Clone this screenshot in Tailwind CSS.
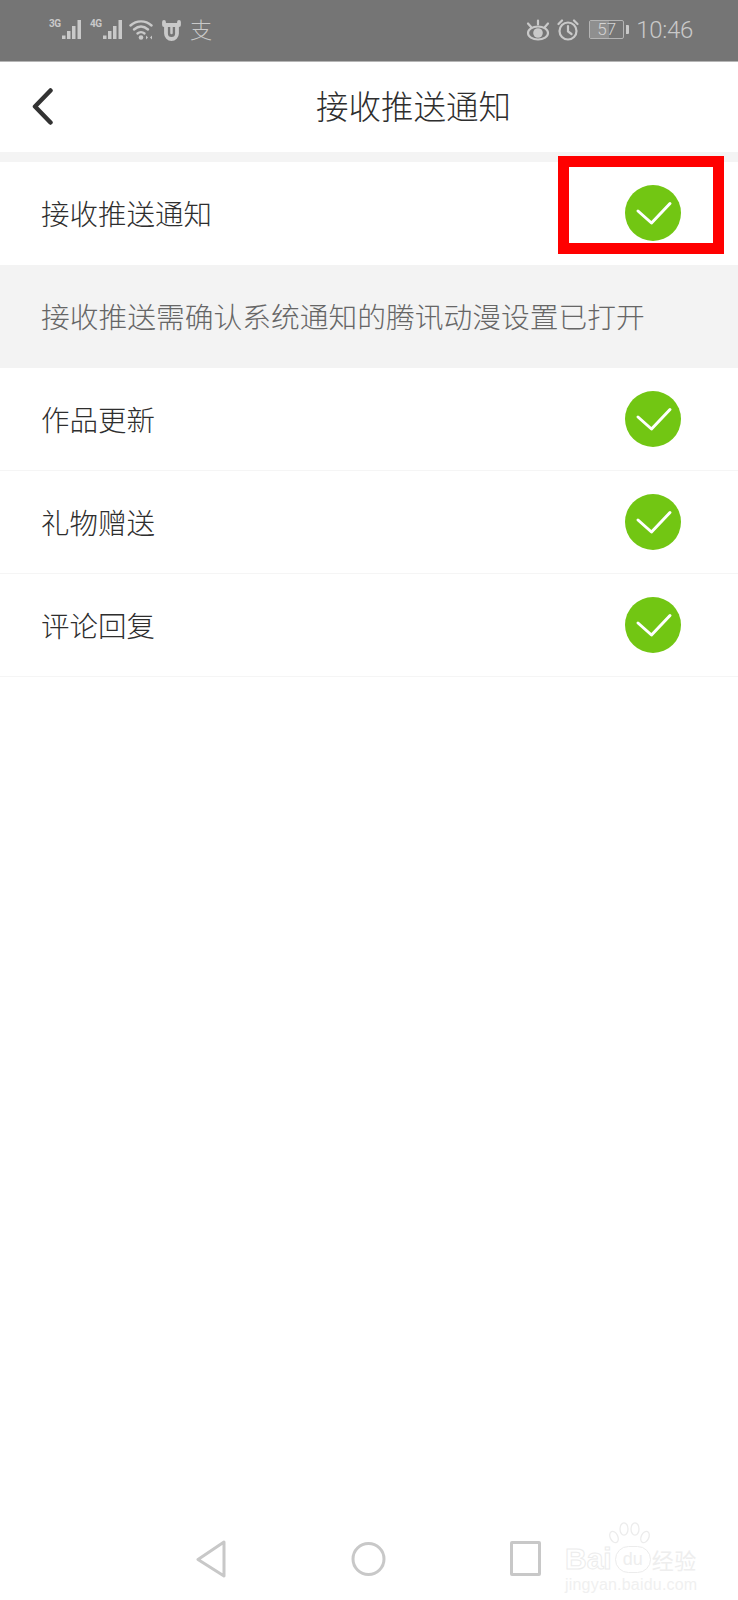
<!DOCTYPE html>
<html lang="zh-CN">
<head>
<meta charset="utf-8">
<title>接收推送通知</title>
<script src="https://cdn.jsdelivr.net/npm/@tailwindcss/browser@4"></script>
</head>
<body class="bg-white">
<div class="relative w-[738px] h-[1600px] overflow-hidden flex flex-col bg-white font-['Noto_Sans_CJK_SC','Noto_Sans',sans-serif]">

  <!-- status bar -->
  <div class="h-[62px] shrink-0 bg-[#757575] border-b border-[#b5b5b5] flex items-center justify-between pl-[49px] pr-[45px] text-[#c9c9c9]">
    <div class="flex items-center h-[24px] -mt-[2px]">
      <span class="w-[12px] text-[10px] leading-none font-['Roboto',sans-serif] font-bold self-start mt-[1px] tracking-[-0.5px]">3G</span>
      <svg class="w-[22px] h-[22px]" viewBox="0 0 22 22" fill="currentColor"><rect x="1" y="16.500" width="3.500" height="3.500"/><rect x="6" y="12" width="3.500" height="8"/><rect x="11" y="7" width="3.500" height="13"/><rect x="16.500" y="1" width="3.500" height="19"/></svg>
      <span class="w-[12px] ml-[7px] text-[10px] leading-none font-['Roboto',sans-serif] font-bold self-start mt-[1px] tracking-[-0.5px]">4G</span>
      <svg class="w-[22px] h-[22px]" viewBox="0 0 22 22" fill="currentColor"><rect x="1" y="16.500" width="3.500" height="3.500"/><rect x="6" y="12" width="3.500" height="8"/><rect x="11" y="7" width="3.500" height="13"/><rect x="16.500" y="1" width="3.500" height="19"/></svg>
      <!-- wifi -->
      <svg class="ml-[5px] w-[26px] h-[22px]" viewBox="0 0 26 22" fill="none" stroke="currentColor" stroke-width="2.400" stroke-linecap="round"><path d="M1.500 6.500C7.500 1 16.500 1 22.500 6.500"/><path d="M5 10.500C9.500 6.500 14.500 6.500 19 10.500"/><path d="M8.500 14.500C10.500 12.800 13.500 12.800 15.500 14.500"/><circle cx="12" cy="18.500" r="2.300" fill="currentColor" stroke="none"/><path d="M19 18.500l-2-2v4zM21 18.500l2-2v4z" fill="currentColor" stroke="none"/></svg>
      <!-- bull badge -->
      <svg class="ml-[6px] w-[21px] h-[22px]" viewBox="0 0 21 22" fill="none" stroke="currentColor" stroke-width="3.800" stroke-linecap="round" stroke-linejoin="round"><path d="M3 3v3h15V3"/><path d="M5 6.500v8a5.500 5.500 0 0 0 11 0v-8"/><path d="M10.500 8v6" stroke-width="2.500"/></svg>
      <span class="ml-[8px] w-[22px] text-[22px] leading-none font-light -mt-[3px]">支</span>
    </div>
    <div class="flex items-center h-[24px] -mt-[2px]">
      <!-- eye -->
      <svg class="w-[24px] h-[22px]" viewBox="0 0 24 22" fill="none" stroke="currentColor" stroke-width="2.200" stroke-linecap="round"><path d="M2 4.500l3.500 4M22 4.500l-3.500 4M12 1.500v4"/><ellipse cx="12" cy="14" rx="10" ry="6.500"/><circle cx="12" cy="14" r="4.800" fill="currentColor" stroke="none"/></svg>
      <!-- alarm clock -->
      <svg class="ml-[7px] w-[22px] h-[24px]" viewBox="0 0 22 24" fill="none" stroke="currentColor" stroke-width="2.200" stroke-linecap="round"><circle cx="11" cy="13" r="8.500"/><path d="M11 8v5.500l3.500 2.500M1.500 6L5 2.500M20.500 6L17 2.500"/></svg>
      <!-- battery -->
      <div class="ml-[10px] relative w-[35px] h-[19px] border border-[#b4b4b4] rounded-[2px] overflow-hidden">
        <div class="h-full w-[57%] bg-[#8f8f8f]"></div>
        <span class="absolute inset-0 flex items-center justify-center text-[17px] leading-none font-['Roboto',sans-serif] font-light text-[#d4d4d4]">57</span>
      </div>
      <div class="ml-[2px] w-[3px] h-[9px] bg-[#c9c9c9] rounded-r-[1px]"></div>
      <span class="ml-[7px] text-[24px] leading-none font-['Roboto',sans-serif] font-light tracking-[-0.3px]">10:46</span>
    </div>
  </div>

  <!-- title bar -->
  <div class="h-[90px] shrink-0 flex items-center pl-[32px]">
    <svg class="w-[21px] h-[37px] shrink-0 -mt-[2px]" viewBox="0 0 21 37" fill="none" stroke="#333333" stroke-width="4.500" stroke-linecap="round" stroke-linejoin="round"><path d="M18.500 2.500L3 18.500L18.500 34.500"/></svg>
    <h1 class="ml-[263px] text-[32.500px] leading-none font-light text-[#2e2e2e] whitespace-nowrap -mt-[3px]">接收推送通知</h1>
  </div>

  <div class="h-[10px] shrink-0 bg-[#f4f4f4]"></div>

  <div class="h-[103px] shrink-0 flex items-center justify-between pl-[41px] pr-[57px]">
    <span class="text-[28.500px] leading-none font-light text-[#2e2e2e]">接收推送通知</span>
    <svg class="w-[56px] h-[56px] -mt-[1px]" viewBox="0 0 56 56"><circle cx="28" cy="28" r="28" fill="#72c613"/><path d="M13 26L26.500 38L45 18.500" fill="none" stroke="#ffffff" stroke-width="3" stroke-linecap="round" stroke-linejoin="round"/></svg>
  </div>

  <div class="h-[103px] shrink-0 bg-[#f3f3f3] flex items-center pl-[41px]">
    <span class="text-[28.750px] leading-none font-light text-[#666666] whitespace-nowrap">接收推送需确认系统通知的腾讯动漫设置已打开</span>
  </div>

  <div class="h-[103px] shrink-0 flex items-center justify-between pl-[41px] pr-[57px] border-b border-[#f5f5f5]">
    <span class="text-[28.500px] leading-none font-light text-[#2e2e2e] mt-[1px]">作品更新</span>
    <svg class="w-[56px] h-[56px] -mt-[1px]" viewBox="0 0 56 56"><circle cx="28" cy="28" r="28" fill="#72c613"/><path d="M13 26L26.500 38L45 18.500" fill="none" stroke="#ffffff" stroke-width="3" stroke-linecap="round" stroke-linejoin="round"/></svg>
  </div>
  <div class="h-[103px] shrink-0 flex items-center justify-between pl-[41px] pr-[57px] border-b border-[#f5f5f5]">
    <span class="text-[28.500px] leading-none font-light text-[#2e2e2e] mt-[1px]">礼物赠送</span>
    <svg class="w-[56px] h-[56px] -mt-[1px]" viewBox="0 0 56 56"><circle cx="28" cy="28" r="28" fill="#72c613"/><path d="M13 26L26.500 38L45 18.500" fill="none" stroke="#ffffff" stroke-width="3" stroke-linecap="round" stroke-linejoin="round"/></svg>
  </div>
  <div class="h-[103px] shrink-0 flex items-center justify-between pl-[41px] pr-[57px] border-b border-[#f5f5f5]">
    <span class="text-[28.500px] leading-none font-light text-[#2e2e2e] mt-[1px]">评论回复</span>
    <svg class="w-[56px] h-[56px] -mt-[1px]" viewBox="0 0 56 56"><circle cx="28" cy="28" r="28" fill="#72c613"/><path d="M13 26L26.500 38L45 18.500" fill="none" stroke="#ffffff" stroke-width="3" stroke-linecap="round" stroke-linejoin="round"/></svg>
  </div>

  <!-- navigation keys -->
  <div class="mt-auto h-[37px] mb-[23px] flex items-center pl-[196px]">
    <svg class="w-[30px] h-[38px]" viewBox="0 0 30 38" fill="none" stroke="#c8c8c8" stroke-width="3" stroke-linejoin="round"><path d="M28 2L2 19.500L28 36z"/></svg>
    <svg class="ml-[125px] w-[35px] h-[38px]" viewBox="0 0 35 38"><circle cx="17.500" cy="19" r="15.500" fill="none" stroke="#c8c8c8" stroke-width="3"/></svg>
    <div class="ml-[124px] w-[31px] h-[35px] border-[3px] border-[#c8c8c8] rounded-[2px]"></div>
  </div>

  <!-- highlight frame around the first toggle -->
  <div class="absolute left-[558px] top-[156px] w-[166px] h-[98px] border-[11px] border-[#ff0000]"></div>

  <!-- site mark in the lower corner -->
  <div class="absolute left-[565px] top-[1522px] w-[134px] h-[72px] text-[#eeeeee] font-['Liberation_Sans',sans-serif]">
    <svg class="absolute left-[44px] top-0 w-[42px] h-[28px]" viewBox="0 0 42 28" fill="none" stroke="#ececec" stroke-width="1.300"><ellipse cx="5" cy="15" rx="3.800" ry="6" transform="rotate(-25 5 15)"/><ellipse cx="15" cy="7" rx="4" ry="6.200"/><ellipse cx="26" cy="7" rx="4" ry="6.200"/><ellipse cx="36" cy="15" rx="3.800" ry="6" transform="rotate(25 36 15)"/></svg>
    <div class="absolute left-0 top-[22px] flex items-center">
      <span class="text-[30px] leading-none font-bold text-transparent [-webkit-text-stroke:1px_#ececec]">Bai</span>
      <span class="ml-[3px] w-[36px] h-[27px] rounded-full border border-[#ececec] flex items-center justify-center text-[18px] leading-none">du</span>
      <span class="ml-[1px] text-[22px] leading-none font-['Noto_Sans_CJK_SC',sans-serif] whitespace-nowrap tracking-[0.5px]">经验</span>
    </div>
    <div class="absolute left-0 top-[55px] text-[16px] leading-none whitespace-nowrap tracking-[0.2px] text-[#f0f0f0]">jingyan.baidu.com</div>
  </div>
</div>
</body>
</html>
